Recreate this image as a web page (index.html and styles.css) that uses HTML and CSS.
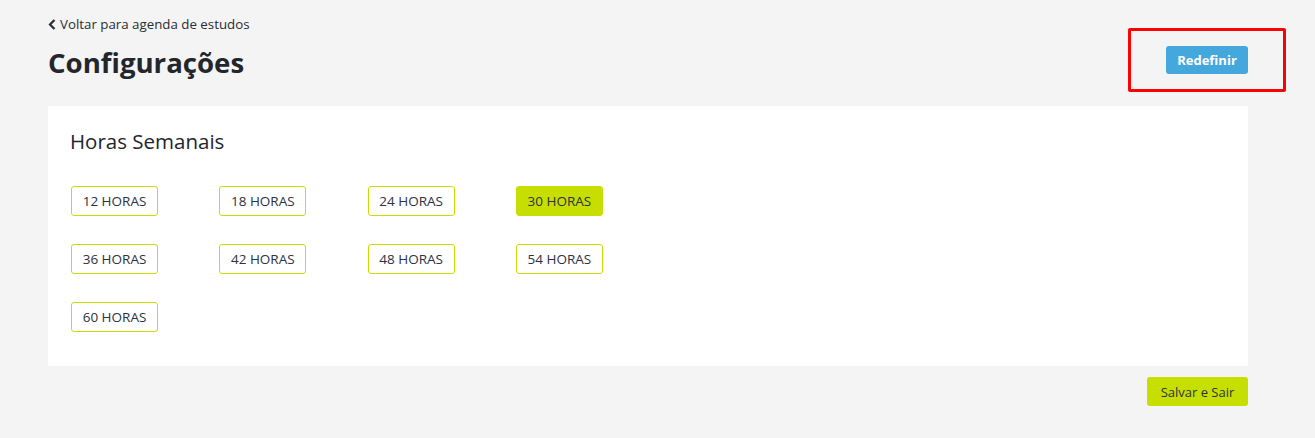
FILE: index.html
```html
<!DOCTYPE html>
<html lang="pt-BR">
<head>
  <meta charset="UTF-8">
  <title>Configurações</title>
  <link rel="stylesheet" href="styles.css">
</head>
<body>
  <div class="page">
    <a class="back" href="#">
      <svg width="8" height="11" viewBox="0 0 8 11"><path d="M6.5 1 L2 5.5 L6.5 10" fill="none" stroke="#2a2d34" stroke-width="2.2"/></svg>
      Voltar para agenda de estudos
    </a>
    <div class="head">
      <h1>Configurações</h1>
      <div class="reset">
        <button class="btn-blue">Redefinir</button>
        <span class="mark"></span>
      </div>
    </div>
    <div class="card">
      <h2>Horas Semanais</h2>
      <div class="hours">
        <button class="hour">12 HORAS</button>
        <button class="hour">18 HORAS</button>
        <button class="hour">24 HORAS</button>
        <button class="hour active">30 HORAS</button>
        <button class="hour">36 HORAS</button>
        <button class="hour">42 HORAS</button>
        <button class="hour">48 HORAS</button>
        <button class="hour">54 HORAS</button>
        <button class="hour">60 HORAS</button>
      </div>
    </div>
    <div class="foot">
      <button class="btn-green">Salvar e Sair</button>
    </div>
  </div>
</body>
</html>
```

FILE: styles.css
```css
*{margin:0;padding:0;box-sizing:border-box;}

body{background:#f4f4f4;font-family:"Open Sans",sans-serif;color:#272b34;}
.page{width:1200px;margin-left:48px;padding-top:15px;}

.back{display:flex;align-items:center;gap:4px;font-size:13.3px;color:#2a2d34;text-decoration:none;height:18px;}
.back svg{margin-top:1px;}

.head{display:flex;justify-content:space-between;align-items:flex-start;margin-top:10px;}
.head h1{font-size:27.6px;font-weight:700;line-height:38px;color:#23262d;}
.reset{position:relative;margin-top:3px;}
.mark{position:absolute;left:-38px;top:-18px;width:158px;height:64px;border:3px solid #f00;border-radius:2px;}
.btn-blue{background:#45a8dd;color:#fff;border:none;border-radius:3px;width:82px;height:28px;font-family:"Open Sans",sans-serif;font-size:13px;font-weight:700;display:block;}

.card{background:#fff;margin-top:25px;padding:21px 22px 0 22px;height:260px;}
.card h2{font-size:20.5px;font-weight:400;line-height:28px;color:#22252c;}
.hours{display:grid;grid-template-columns:repeat(4,148.3px);row-gap:28px;margin-top:31px;padding-left:1px;}
.hour{width:87px;height:30px;background:#fff;border:1px solid #c6df00;border-radius:3px;font-family:"Open Sans",sans-serif;font-size:13.5px;font-weight:500;color:#2d3142;}
.hour.active{background:#c6df00;}

.foot{display:flex;justify-content:flex-end;margin-top:11px;}
.btn-green{background:#c6df00;border:none;border-radius:3px;width:101px;height:29px;font-family:"Open Sans",sans-serif;font-size:13px;color:#2d3240;}
```
